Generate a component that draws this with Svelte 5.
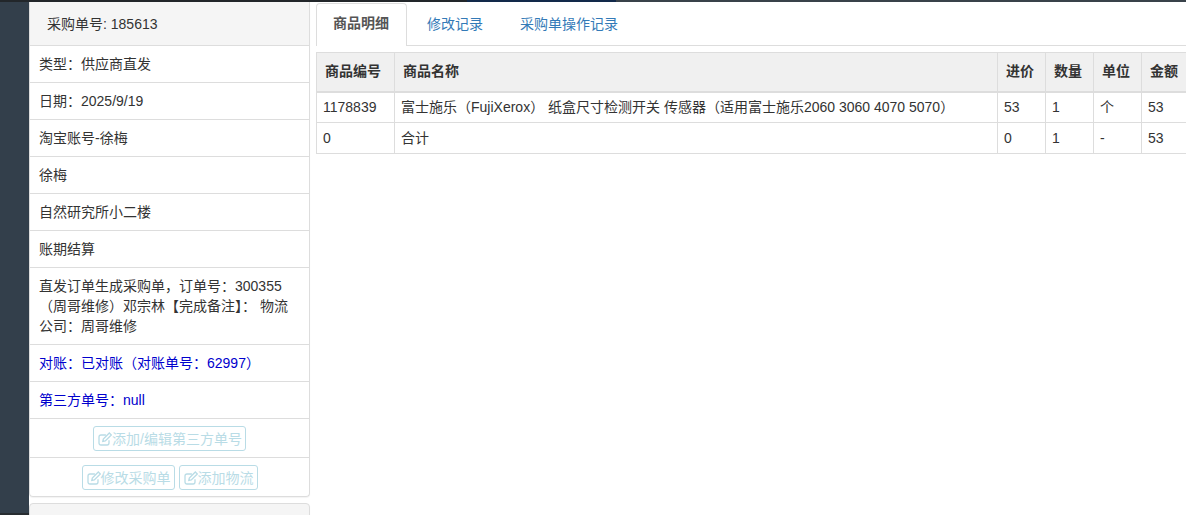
<script>
  const rows = [
    { text: '类型：供应商直发' },
    { text: '日期：2025/9/19' },
    { text: '淘宝账号-徐梅' },
    { text: '徐梅' },
    { text: '自然研究所小二楼' },
    { text: '账期结算' },
    { text: '直发订单生成采购单，订单号：300355（周哥维修）邓宗林【完成备注】： 物流公司：周哥维修' },
    { text: '对账：已对账（对账单号：62997）', blue: true },
    { text: '第三方单号：null', blue: true }
  ]

  const tabs = ['商品明细', '修改记录', '采购单操作记录']

  const items = [
    ['1178839', '富士施乐（FujiXerox） 纸盒尺寸检测开关 传感器（适用富士施乐2060 3060 4070 5070）', '53', '1', '个', '53'],
    ['0', '合计', '0', '1', '-', '53']
  ]
</script>

{#snippet edit()}
  <svg class="edit" viewBox="0 0 14 14" width="14" height="14" fill="none" stroke="currentColor" stroke-width="1.3">
    <path d="M11 8.200v2.900a1.900 1.900 0 0 1-1.900 1.900H2.900A1.900 1.900 0 0 1 1 11.100V4.900A1.900 1.900 0 0 1 2.900 3h5" />
    <path d="M4.800 9.500l.5-2.500L11.300 1l2 2-6 6z" />
  </svg>
{/snippet}

<div class="page">
  <div class="topbar"></div>
  <div class="main">
    <aside class="nav"></aside>

    <div class="left">
      <section class="panel">
        <div class="heading">采购单号: 185613</div>
        {#each rows as row}
          <div class="row" class:blue={row.blue}>{row.text}</div>
        {/each}
        <div class="actions">
          <button>{@render edit()}添加/编辑第三方单号</button>
        </div>
        <div class="actions">
          <button>{@render edit()}修改采购单</button>
          <button>{@render edit()}添加物流</button>
        </div>
      </section>
      <section class="panel second"></section>
    </div>

    <div class="right">
      <ul class="tabs">
        {#each tabs as tab, i}
          <li class:active={i === 0}>{tab}</li>
        {/each}
      </ul>

      <table>
        <thead>
          <tr>
            <th class="c-code">商品编号</th>
            <th class="c-name">商品名称</th>
            <th class="c-num">进价</th>
            <th class="c-num">数量</th>
            <th class="c-num">单位</th>
            <th class="c-num">金额</th>
          </tr>
        </thead>
        <tbody>
          {#each items as item}
            <tr>
              {#each item as cell}
                <td>{cell}</td>
              {/each}
            </tr>
          {/each}
        </tbody>
      </table>
    </div>
  </div>
</div>

<style>
  :global(body) {
    margin: 0;
    background: #fff;
  }

  .page {
    width: 1186px;
    height: 515px;
    overflow: hidden;
    font-family: "Liberation Sans", "Noto Sans CJK SC", sans-serif;
    font-size: 14px;
    line-height: 20px;
    color: #333;
  }

  .topbar {
    height: 2px;
    background: linear-gradient(to right, #22262a 467px, #12294a 467px, #12294a 616px, #39424a 616px);
  }

  .main {
    display: flex;
    height: 513px;
  }

  .nav {
    width: 29px;
    flex: none;
    background: #333f4b;
    border-bottom: 2px solid #272c30;
    box-sizing: border-box;
  }

  .left {
    width: 281px;
    flex: none;
    display: flex;
    flex-direction: column;
    gap: 6px;
  }

  .panel {
    box-sizing: border-box;
    border: 1px solid #ddd;
    border-top: 0;
    border-radius: 0 0 4px 4px;
    box-shadow: 0 1px 1px rgba(0, 0, 0, 0.05);
  }

  .second {
    height: 20px;
    flex: none;
    border: 1px solid #ddd;
    border-radius: 4px 4px 0 0;
    background: #f5f5f5;
  }

  .heading {
    height: 44px;
    box-sizing: border-box;
    padding: 12px 0 0 17px;
    background: #f5f5f5;
    border-bottom: 1px solid #ddd;
  }

  .row {
    padding: 8px 9px;
    border-bottom: 1px solid #ddd;
  }

  .blue {
    color: #0000cd;
  }

  .actions {
    display: flex;
    justify-content: center;
    gap: 4px;
    height: 39px;
    padding-top: 7px;
    box-sizing: border-box;
    border-bottom: 1px solid #ddd;
  }

  .actions:last-child {
    height: 38px;
    border-bottom: 0;
  }

  button {
    display: flex;
    align-items: center;
    height: 25px;
    padding: 0 3px 0 4px;
    border: 1px solid #b9dce6;
    border-radius: 3px;
    background: #fff;
    color: #b9dce6;
    font: inherit;
  }

  .edit {
    flex: none;
  }

  .right {
    flex: 1;
    min-width: 0;
    padding: 1px 0 0 6px;
  }

  .tabs {
    display: flex;
    height: 42px;
    margin: 0 0 6px;
    padding: 0;
    list-style: none;
    border-bottom: 1px solid #ddd;
  }

  .tabs li {
    padding: 11px 17px 0 20px;
    color: #337ab7;
  }

  .tabs li.active {
    padding: 9px 17px 0 16px;
    margin-bottom: -1px;
    color: #555;
    font-weight: bold;
    background: #fff;
    border: 1px solid #ddd;
    border-bottom: 0;
    border-radius: 4px 4px 0 0;
  }

  table {
    width: 873px;
    table-layout: fixed;
    border-collapse: collapse;
  }

  th,
  td {
    box-sizing: border-box;
    border: 1px solid #ddd;
    text-align: left;
    padding: 0 6px 1px;
    height: 31px;
    white-space: nowrap;
  }

  th {
    height: 39px;
    padding: 0 8px 2px;
    background: #f0f0f0;
    border-bottom-width: 2px;
  }

  .c-code {
    width: 78px;
  }

  .c-name {
    width: 603px;
  }

  .c-num {
    width: 48px;
  }
</style>
